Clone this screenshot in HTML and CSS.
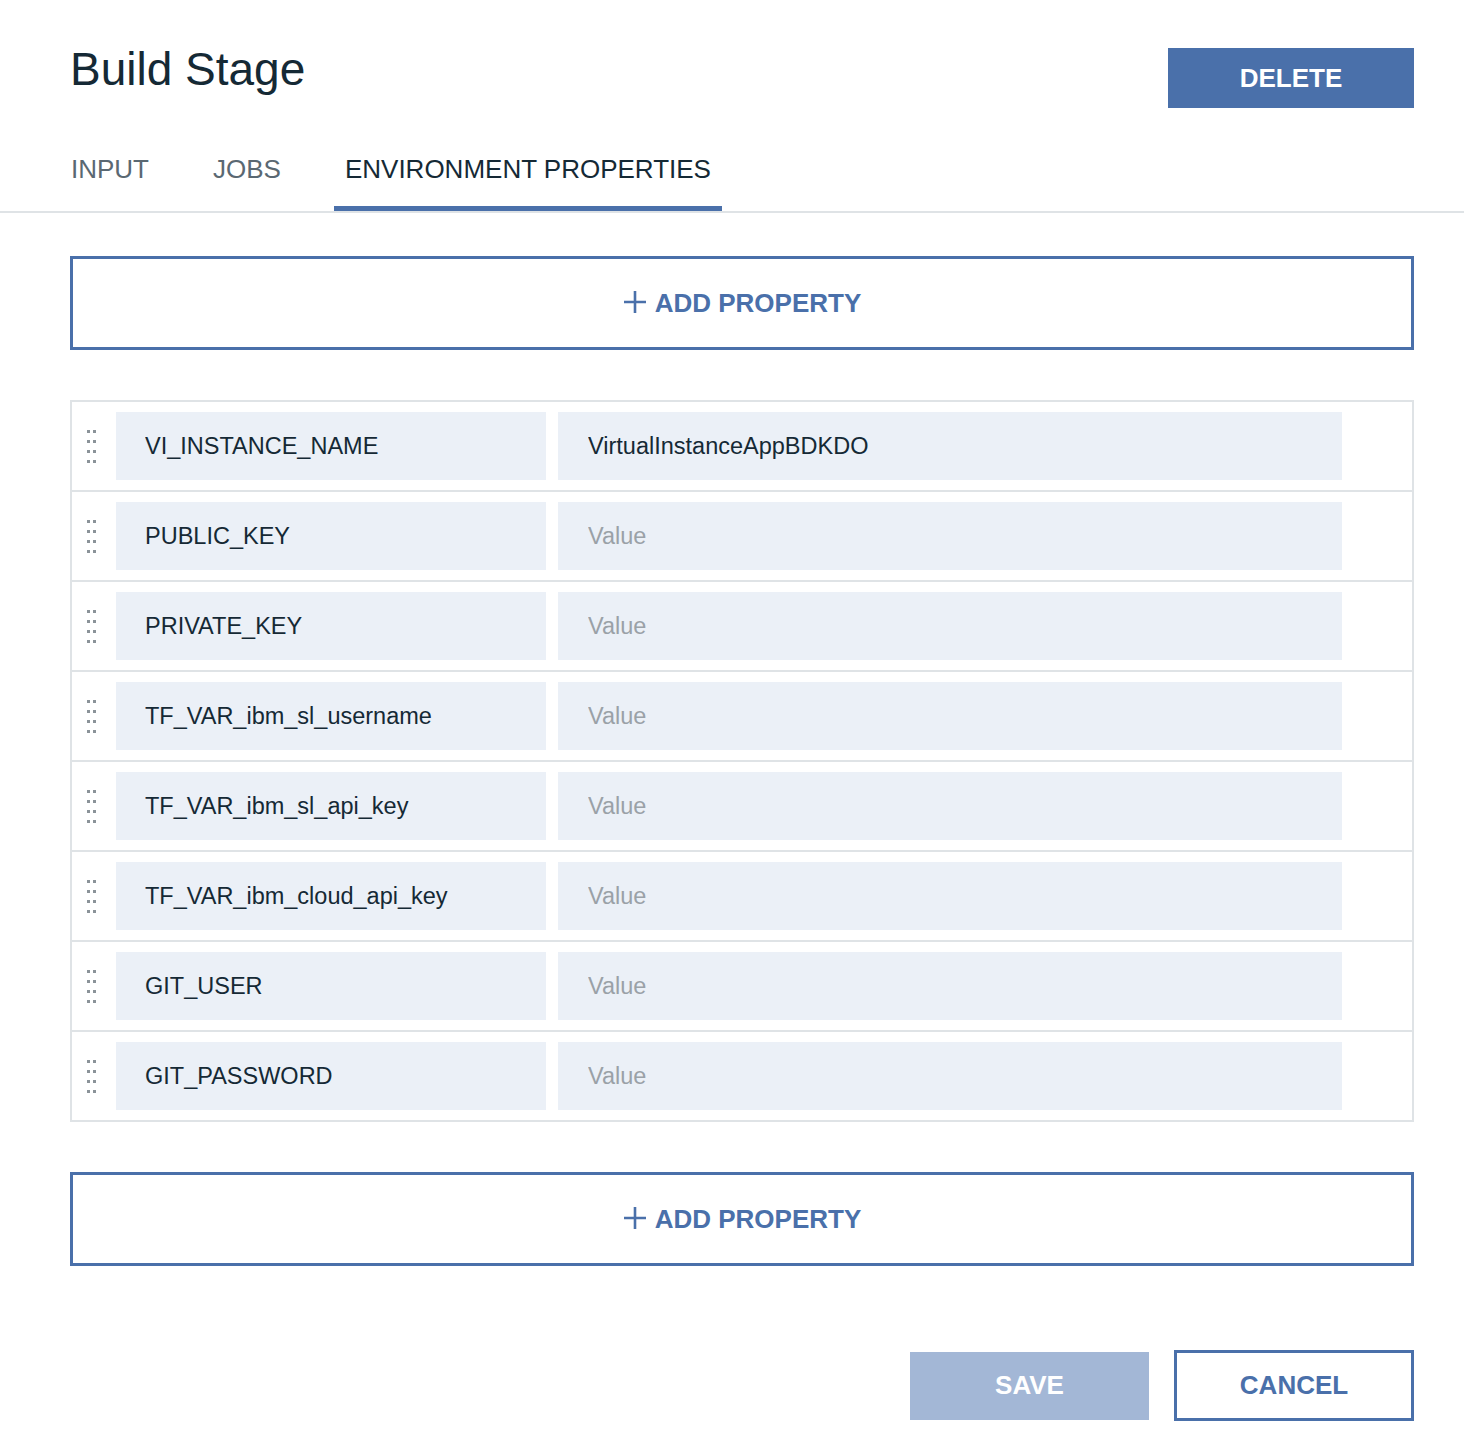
FILE: index.html
```html
<!DOCTYPE html>
<html lang="en">
<head>
<meta charset="utf-8">
<title>Build Stage</title>
<link rel="stylesheet" href="styles.css">
</head>
<body>
<div class="page">
  <header class="header">
    <h1 class="title">Build Stage</h1>
    <button class="btn btn-delete" type="button">DELETE</button>
  </header>

  <nav class="tabs">
    <div class="tab">INPUT</div>
    <div class="tab">JOBS</div>
    <div class="tab tab-active">ENVIRONMENT PROPERTIES</div>
  </nav>

  <main class="content">
    <button class="add-btn" type="button">
      <svg class="plus" width="24" height="24" viewBox="0 0 24 24"><path d="M12 1v22M1 12h22" stroke="#4a70aa" stroke-width="2.6" fill="none"/></svg>
      <span>ADD PROPERTY</span>
    </button>

    <div class="props">
      <div class="row">
        <svg class="handle" width="10" height="33" viewBox="0 0 10 33"><g fill="#8b9399"><rect x="0" y="0" width="3" height="3"/><rect x="6" y="0" width="3" height="3"/><rect x="0" y="10" width="3" height="3"/><rect x="6" y="10" width="3" height="3"/><rect x="0" y="20" width="3" height="3"/><rect x="6" y="20" width="3" height="3"/><rect x="0" y="30" width="3" height="3"/><rect x="6" y="30" width="3" height="3"/></g></svg>
        <input class="field key" value="VI_INSTANCE_NAME">
        <input class="field val" value="VirtualInstanceAppBDKDO" placeholder="Value">
      </div>
      <div class="row">
        <svg class="handle" width="10" height="33" viewBox="0 0 10 33"><g fill="#8b9399"><rect x="0" y="0" width="3" height="3"/><rect x="6" y="0" width="3" height="3"/><rect x="0" y="10" width="3" height="3"/><rect x="6" y="10" width="3" height="3"/><rect x="0" y="20" width="3" height="3"/><rect x="6" y="20" width="3" height="3"/><rect x="0" y="30" width="3" height="3"/><rect x="6" y="30" width="3" height="3"/></g></svg>
        <input class="field key" value="PUBLIC_KEY">
        <input class="field val" placeholder="Value">
      </div>
      <div class="row">
        <svg class="handle" width="10" height="33" viewBox="0 0 10 33"><g fill="#8b9399"><rect x="0" y="0" width="3" height="3"/><rect x="6" y="0" width="3" height="3"/><rect x="0" y="10" width="3" height="3"/><rect x="6" y="10" width="3" height="3"/><rect x="0" y="20" width="3" height="3"/><rect x="6" y="20" width="3" height="3"/><rect x="0" y="30" width="3" height="3"/><rect x="6" y="30" width="3" height="3"/></g></svg>
        <input class="field key" value="PRIVATE_KEY">
        <input class="field val" placeholder="Value">
      </div>
      <div class="row">
        <svg class="handle" width="10" height="33" viewBox="0 0 10 33"><g fill="#8b9399"><rect x="0" y="0" width="3" height="3"/><rect x="6" y="0" width="3" height="3"/><rect x="0" y="10" width="3" height="3"/><rect x="6" y="10" width="3" height="3"/><rect x="0" y="20" width="3" height="3"/><rect x="6" y="20" width="3" height="3"/><rect x="0" y="30" width="3" height="3"/><rect x="6" y="30" width="3" height="3"/></g></svg>
        <input class="field key" value="TF_VAR_ibm_sl_username">
        <input class="field val" placeholder="Value">
      </div>
      <div class="row">
        <svg class="handle" width="10" height="33" viewBox="0 0 10 33"><g fill="#8b9399"><rect x="0" y="0" width="3" height="3"/><rect x="6" y="0" width="3" height="3"/><rect x="0" y="10" width="3" height="3"/><rect x="6" y="10" width="3" height="3"/><rect x="0" y="20" width="3" height="3"/><rect x="6" y="20" width="3" height="3"/><rect x="0" y="30" width="3" height="3"/><rect x="6" y="30" width="3" height="3"/></g></svg>
        <input class="field key" value="TF_VAR_ibm_sl_api_key">
        <input class="field val" placeholder="Value">
      </div>
      <div class="row">
        <svg class="handle" width="10" height="33" viewBox="0 0 10 33"><g fill="#8b9399"><rect x="0" y="0" width="3" height="3"/><rect x="6" y="0" width="3" height="3"/><rect x="0" y="10" width="3" height="3"/><rect x="6" y="10" width="3" height="3"/><rect x="0" y="20" width="3" height="3"/><rect x="6" y="20" width="3" height="3"/><rect x="0" y="30" width="3" height="3"/><rect x="6" y="30" width="3" height="3"/></g></svg>
        <input class="field key" value="TF_VAR_ibm_cloud_api_key">
        <input class="field val" placeholder="Value">
      </div>
      <div class="row">
        <svg class="handle" width="10" height="33" viewBox="0 0 10 33"><g fill="#8b9399"><rect x="0" y="0" width="3" height="3"/><rect x="6" y="0" width="3" height="3"/><rect x="0" y="10" width="3" height="3"/><rect x="6" y="10" width="3" height="3"/><rect x="0" y="20" width="3" height="3"/><rect x="6" y="20" width="3" height="3"/><rect x="0" y="30" width="3" height="3"/><rect x="6" y="30" width="3" height="3"/></g></svg>
        <input class="field key" value="GIT_USER">
        <input class="field val" placeholder="Value">
      </div>
      <div class="row">
        <svg class="handle" width="10" height="33" viewBox="0 0 10 33"><g fill="#8b9399"><rect x="0" y="0" width="3" height="3"/><rect x="6" y="0" width="3" height="3"/><rect x="0" y="10" width="3" height="3"/><rect x="6" y="10" width="3" height="3"/><rect x="0" y="20" width="3" height="3"/><rect x="6" y="20" width="3" height="3"/><rect x="0" y="30" width="3" height="3"/><rect x="6" y="30" width="3" height="3"/></g></svg>
        <input class="field key" value="GIT_PASSWORD">
        <input class="field val" placeholder="Value">
      </div>
    </div>

    <button class="add-btn" type="button">
      <svg class="plus" width="24" height="24" viewBox="0 0 24 24"><path d="M12 1v22M1 12h22" stroke="#4a70aa" stroke-width="2.6" fill="none"/></svg>
      <span>ADD PROPERTY</span>
    </button>

    <footer class="footer">
      <button class="btn btn-save" type="button">SAVE</button>
      <button class="btn btn-cancel" type="button">CANCEL</button>
    </footer>
  </main>
</div>
</body>
</html>
```

FILE: styles.css
```css
* { box-sizing: border-box; }

html, body {
  margin: 0;
  padding: 0;
  background: #ffffff;
}

body {
  font-family: "Liberation Sans", Arial, Helvetica, sans-serif;
  color: #152935;
}

.page {
  width: 1464px;
}

.header {
  display: flex;
  justify-content: space-between;
  align-items: flex-start;
  padding: 48px 50px 0 70px;
}

.title {
  margin: 0;
  font-size: 46px;
  line-height: 60px;
  font-weight: 400;
  color: #152935;
  margin-top: -9px;
}

.btn {
  font-family: "Liberation Sans", Arial, Helvetica, sans-serif;
  font-weight: 700;
  font-size: 26px;
  border: none;
  cursor: pointer;
  padding: 0;
}

.btn-delete {
  width: 246px;
  height: 60px;
  background: #4a70aa;
  color: #ffffff;
}

.tabs {
  display: flex;
  gap: 42px;
  padding: 0 0 0 60px;
  margin-top: 46px;
  border-bottom: 2px solid #dfe3e6;
}

.tab {
  font-size: 26px;
  line-height: 30px;
  padding: 0 11px 22px;
  color: #5a6872;
  border-bottom: 5px solid transparent;
}

.tab-active {
  color: #152935;
  border-bottom-color: #4a70aa;
}

.content {
  padding: 43px 50px 0 70px;
}

.add-btn {
  display: flex;
  align-items: center;
  justify-content: center;
  gap: 8px;
  width: 100%;
  height: 94px;
  background: #ffffff;
  border: 3px solid #4a70aa;
  color: #4a70aa;
  font-family: "Liberation Sans", Arial, Helvetica, sans-serif;
  font-weight: 700;
  font-size: 26px;
  padding: 0;
  cursor: pointer;
}

.add-btn .plus {
  display: block;
  margin-top: -2px;
}

.props {
  margin: 50px 0;
  border: 2px solid #dfe3e6;
}

.row {
  display: flex;
  align-items: center;
  padding: 10px 70px 10px 15px;
  border-bottom: 2px solid #dfe3e6;
}

.row:last-child {
  border-bottom: none;
}

.handle {
  flex: 0 0 10px;
  margin-right: 19px;
  display: block;
}

.field {
  height: 68px;
  border: none;
  outline: none;
  background: #ebf0f7;
  font-family: "Liberation Sans", Arial, Helvetica, sans-serif;
  font-size: 23.5px;
  color: #152935;
  padding: 0 0 0 29px;
  margin: 0;
}

.field::placeholder {
  color: #9aa1a7;
}

.key {
  flex: 0 0 430px;
  width: 430px;
}

.val {
  flex: 1 1 auto;
  min-width: 0;
  margin-left: 12px;
  padding-left: 30px;
}

.footer {
  display: flex;
  justify-content: flex-end;
  align-items: center;
  gap: 25px;
  margin-top: 84px;
}

.btn-save {
  width: 239px;
  height: 68px;
  background: #a3b7d6;
  color: #ffffff;
}

.btn-cancel {
  width: 240px;
  height: 71px;
  background: #ffffff;
  border: 3px solid #4a70aa;
  color: #4a70aa;
}
```
